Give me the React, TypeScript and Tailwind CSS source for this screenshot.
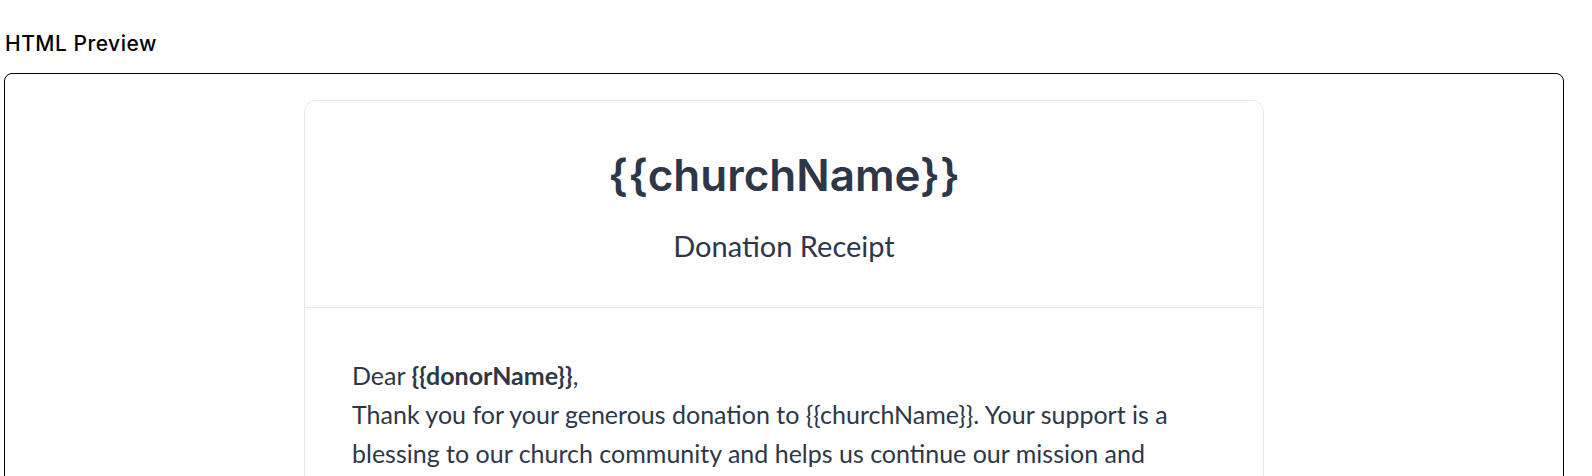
import React from "react";

export default function App() {
  return (
    <div className="w-[1592px] h-[476px] overflow-hidden bg-white pl-[4px]" style={{ fontFamily: "Inter, 'Liberation Sans', sans-serif" }}>
      <div className="pt-[30px] pb-[15px] pl-[1px] text-[21px] leading-[28px] tracking-[0.5px] font-medium text-black">HTML Preview</div>
      <div className="w-[1560px] h-[420px] border border-black rounded-lg px-[26px] pt-[26px] overflow-hidden">
        <div className="max-w-[960px] mx-auto border border-[#e5e7eb] rounded-xl">
          <div className="border-b border-[#e5e7eb] pt-[48px] pb-[43px] text-center">
            <div className="text-[44px] leading-[52px] font-semibold text-[#2d3748]" style={{ fontFamily: "Inter, sans-serif" }}>{"{{churchName}}"}</div>
            <div className="mt-[27px] text-[29px] leading-[36px] text-[#2d3748]" style={{ fontFamily: "Lato, sans-serif" }}>Donation Receipt</div>
          </div>
          <div className="px-[47px] pt-[48px] text-[25px] leading-[39px] text-[#2d3748]" style={{ fontFamily: "Lato, sans-serif" }}>
            <p>Dear <strong className="font-bold">{"{{donorName}}"}</strong>,</p>
            <p>Thank you for your generous donation to {"{{churchName}}"}. Your support is a blessing to our church community and helps us continue our mission and ministry in serving others.</p>
          </div>
        </div>
      </div>
    </div>
  );
}
